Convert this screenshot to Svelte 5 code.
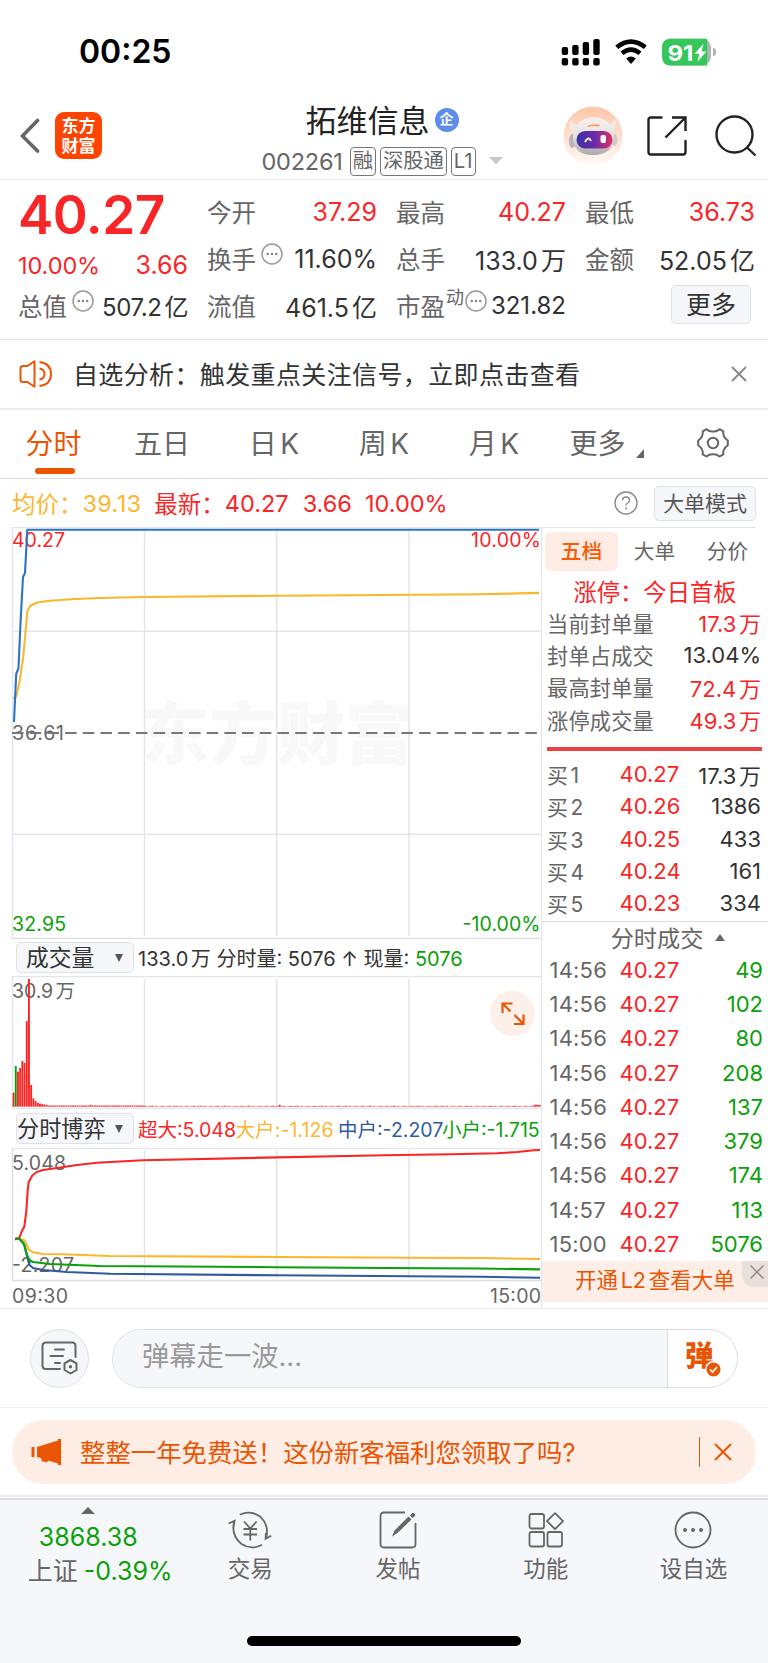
<script lang="ts">
	type Tone = 'up' | 'down' | 'ink';

	interface Row {
		label: string;
		value: string;
		tone: Tone;
	}

	const periods = ['分时', '五日', '日K', '周K', '月K'];

	const sealRows: Row[] = [
		{ label: '当前封单量', value: '17.3万', tone: 'up' },
		{ label: '封单占成交', value: '13.04%', tone: 'ink' },
		{ label: '最高封单量', value: '72.4万', tone: 'up' },
		{ label: '涨停成交量', value: '49.3万', tone: 'up' }
	];

	const bids = [
		{ label: '买1', price: '40.27', volume: '17.3万' },
		{ label: '买2', price: '40.26', volume: '1386' },
		{ label: '买3', price: '40.25', volume: '433' },
		{ label: '买4', price: '40.24', volume: '161' },
		{ label: '买5', price: '40.23', volume: '334' }
	];

	const trades = [
		{ time: '14:56', volume: 49 },
		{ time: '14:56', volume: 102 },
		{ time: '14:56', volume: 80 },
		{ time: '14:56', volume: 208 },
		{ time: '14:56', volume: 137 },
		{ time: '14:56', volume: 379 },
		{ time: '14:56', volume: 174 },
		{ time: '14:57', volume: 113 },
		{ time: '15:00', volume: 5076 }
	];

	const gridX = [144.5, 276.7, 409];

	// One bar per trading minute, the opening minutes carry nearly all volume
	const opening = [14, 40.7, 35, 38.7, 45.7, 43.7, 85.7, 127.7, 21.7, 8.3, 5.7, 3.9, 3.2, 2.6, 2.2, 1.8];
	const volumeBars = Array.from({ length: 241 }, (_, i) => {
		const quiet = i < 60 ? 1.2 : 0.3 + ((i * 37) % 11) / 14;
		const height = i === 35 || i === 121 || i >= 237 ? 1.9 : (opening[i] ?? quiet);
		return { x: 12.6 + i * 2.2, height, color: i === 1 ? '#0aa00a' : '#f92627' };
	});

	const flows = [
		{ color: '#2f5a9f', points: '16,1238.5 20,1239 24,1244 26,1252 28,1260 29.5,1265 33,1268 43,1270 67,1272 110,1273.8 277,1275.3 409,1276.3 480,1276.8 540,1277.7' },
		{ color: '#fbb72f', points: '16,1238.5 20,1239.2 24,1240 26,1243 28.7,1249.5 33,1252.3 43,1254 62,1254.2 110,1256 277,1257 409,1257.8 480,1258 540,1259' },
		{ color: '#f92627', points: '15,1239.5 19.3,1238 22,1230.7 24.3,1226.7 26.3,1211.7 27.7,1190 28.7,1182 32.3,1175.5 36.7,1172 43,1170 57,1168 77,1165 97,1162.7 143,1160.3 277,1157.4 384,1155.3 451,1154.3 497,1153.3 517,1152 534,1150.2 540,1150' },
		{ color: '#0aa00a', points: '15,1238.5 19,1238.8 22,1241.5 24.5,1245.5 26.5,1253 29,1260 33,1262 50,1264 100,1266 277,1267.2 384,1268 480,1268.5 540,1269.4' }
	];
</script>

{#snippet dots()}
	<svg class="dots" width="22" height="22" viewBox="0 0 22 22">
		<circle cx="11" cy="11" r="10" fill="none" stroke="#999" stroke-width="1.5" />
		<circle cx="6.8" cy="11" r="1.3" fill="#888" />
		<circle cx="11" cy="11" r="1.3" fill="#888" />
		<circle cx="15.2" cy="11" r="1.3" fill="#888" />
	</svg>
{/snippet}

<div class="screen">
	<div class="status">
		<span class="clock">00:25</span>
		<svg width="151" height="28" viewBox="561 37 151 28">
			<rect x="561.7" y="46" width="6.4" height="8" rx="2" />
			<rect x="572.2" y="44" width="6.4" height="10" rx="2" />
			<rect x="582.7" y="41" width="6.4" height="13" rx="2" />
			<rect x="593.3" y="38" width="6.4" height="16" rx="2" />
			<rect x="561.7" y="57" width="6.4" height="7.4" rx="2" />
			<rect x="572.2" y="57" width="6.4" height="7.4" rx="2" />
			<rect x="582.7" y="57" width="6.4" height="7.4" rx="2" />
			<rect x="593.3" y="57" width="6.4" height="7.4" rx="2" />
			<path d="M616.7 46.3Q631 34.8 645.3 46.3M622 52.3Q631 45 640 52.3" fill="none" stroke="#000" stroke-width="4.6" />
			<path d="M626.2 57.5Q631 53.7 635.8 57.5L631 63Z" />
			<path d="M670 37.7H702A9 9 0 0 1 711 46.7V55.5A9 9 0 0 1 702 64.5H670Z" fill="#b3b3b6" />
			<path d="M670 37.7H707.2V64.5H670A8 8 0 0 1 662 56.5V45.7A8 8 0 0 1 670 37.7Z" fill="#34c759" />
			<text x="667.5" y="59.5" class="battery" textLength="26" lengthAdjust="spacingAndGlyphs">91</text>
			<path d="M703.5 42.8L694.5 52.8H699.2L697.5 60.8L706.5 50.5H701.6Z" fill="#fff" />
		</svg>
		<i class="battery-tip"></i>
	</div>

	<header>
		<div class="head-left">
			<svg width="20" height="36" viewBox="0 0 20 36">
				<path d="M17.5 2.5L2.5 18L17.5 33" fill="none" stroke="#666" stroke-width="3.6" stroke-linecap="round" />
			</svg>
			<div class="logo"><span>东方</span><span>财富</span></div>
		</div>
		<div class="head-mid">
			<div class="name">拓维信息<span class="corp">企</span></div>
			<div class="code">
				<span class="digits">002261</span>
				<span class="tag">融</span>
				<span class="tag">深股通</span>
				<span class="tag">L1</span>
				<svg width="14" height="8" viewBox="0 0 14 8"><path d="M0 0H14L7 7.5Z" fill="#c8c8c8" /></svg>
			</div>
		</div>
		<div class="head-right">
			<svg width="60" height="60" viewBox="0 0 60 60">
				<defs>
					<linearGradient id="halo" x1="0" y1="0" x2="0" y2="1">
						<stop offset="0" stop-color="#ffc5a8" />
						<stop offset="1" stop-color="#fffaf7" />
					</linearGradient>
					<linearGradient id="visor" x1="0" y1="0" x2="1" y2="0">
						<stop offset="0" stop-color="#3a2fa3" />
						<stop offset=".5" stop-color="#6b2ca8" />
						<stop offset="1" stop-color="#e0325e" />
					</linearGradient>
					<linearGradient id="shell" x1="0" y1="0" x2="0" y2="1">
						<stop offset="0" stop-color="#f6f1f1" />
						<stop offset=".5" stop-color="#e6e1e3" />
						<stop offset="1" stop-color="#aca7ac" />
					</linearGradient>
				</defs>
				<circle cx="30" cy="30" r="29.5" fill="url(#halo)" />
				<path d="M10 26Q4 19 9 14Q10 20 17 19ZM50 26Q56 17 51 13Q50 19 43 18Z" fill="#f3e9e7" />
				<ellipse cx="9.5" cy="35" rx="3.5" ry="7" fill="#b9b3b8" />
				<ellipse cx="51.5" cy="34" rx="3" ry="6" fill="#cfc8cd" />
				<path d="M10 31C11 17 20 11.5 30 11.5C42 11.5 50 17 51 30C51 43 43 49 30 49C17 49 10 43 10 31Z" fill="url(#shell)" />
				<rect x="13.5" y="25" width="36" height="17.5" rx="8.7" fill="url(#visor)" />
				<path d="M24 20Q30 17 37 19L36 20.5Q30 19.5 25 21Z" fill="#ff9b50" />
				<path d="M22 36Q25.500 29.500 28 35" fill="none" stroke="#fff" stroke-width="1.8" />
				<rect x="37.5" y="29" width="5.5" height="8" rx="2" fill="#fff" />
			</svg>
			<svg width="40" height="40" viewBox="0 0 40 40" fill="none" stroke="#222" stroke-width="2.4" stroke-linecap="round" stroke-linejoin="round">
				<path d="M14.5 1.5H4Q1.5 1.5 1.5 4V36Q1.5 38.5 4 38.5H36Q38.5 38.5 38.5 36V25" />
				<path d="M25 1.5H38.5V15M38 2L18.5 21.5" stroke-linecap="butt" stroke-linejoin="miter" />
			</svg>
			<svg width="42" height="42" viewBox="0 0 42 42" fill="none" stroke="#222" stroke-width="2.4">
				<circle cx="19.5" cy="19.5" r="18" />
				<path d="M32 32.5L40.5 40.5" />
			</svg>
		</div>
	</header>

	<section class="quote">
		<div class="col">
			<div class="cell big">40.27</div>
			<div class="cell up low"><span class="pct">10.00%</span><span>3.66</span></div>
			<div class="cell"><span class="key">总值{@render dots()}</span><span class="tight">507.2亿</span></div>
		</div>
		<div class="col">
			<div class="cell"><span class="key">今开</span><span class="up">37.29</span></div>
			<div class="cell"><span class="key">换手{@render dots()}</span><span>11.60%</span></div>
			<div class="cell"><span class="key">流值</span><span>461.5亿</span></div>
		</div>
		<div class="col">
			<div class="cell"><span class="key">最高</span><span class="up">40.27</span></div>
			<div class="cell"><span class="key">总手</span><span>133.0万</span></div>
			<div class="cell"><span class="key pe">市盈<sup>动</sup>{@render dots()}</span><span class="tight">321.82</span></div>
		</div>
		<div class="col">
			<div class="cell"><span class="key">最低</span><span class="up">36.73</span></div>
			<div class="cell"><span class="key">金额</span><span>52.05亿</span></div>
			<div class="cell"><button class="more">更多</button></div>
		</div>
	</section>

	<div class="notice">
		<svg width="34" height="28" viewBox="0 0 34 28" fill="none" stroke="#ea5504" stroke-width="2" stroke-linejoin="round">
			<path d="M15.5 1.2V26.8L8.5 22H4Q1.5 22 1.5 19.5V8.5Q1.5 6 4 6H8.5Z" />
			<path d="M20.5 8.5Q25.5 9.5 25.5 14T20.5 19.5M20.5 2Q32 3.5 32 14T20.5 26" />
		</svg>
		<span>自选分析：触发重点关注信号，立即点击查看</span>
		<svg class="close" width="16" height="16" viewBox="0 0 16 16"><path d="M1 1L15 15M15 1L1 15" stroke="#888" stroke-width="1.9" /></svg>
	</div>

	<nav class="periods">
		{#each periods as period, i}
			<span class="period" class:active={i === 0}>{period}</span>
		{/each}
		<span class="period">更多<svg width="8" height="9" viewBox="0 0 8 9"><path d="M8 0V9H0Z" fill="#666" /></svg></span>
		<span class="period gear">
			<svg width="32" height="32" viewBox="0 0 32 32" fill="none" stroke="#666" stroke-width="2" stroke-linejoin="round">
				<path d="M9.5 2.2Q12.500 4.8 16 4.400Q19.500 4.800 22.500 2.200L26.300 4.400Q25.500 10 30.800 13.500V18.200Q25.500 22 26.300 27.300L22.500 29.500Q19.500 27 16 27.300Q12.500 27 9.500 29.500L5.700 27.300Q6.500 22 1.200 18.200V13.500Q6.500 10 5.700 4.400Z" />
				<circle cx="16" cy="16" r="5.2" />
			</svg>
		</span>
	</nav>

	<div class="summary">
		<span class="avg">均价：</span><span class="avg s1">39.13</span>
		<span class="up">最新：</span><span class="up s2">40.27</span><span class="up s3">3.66</span><span class="up s4">10.00%</span>
		<svg class="help" width="24" height="24" viewBox="0 0 24 24">
			<circle cx="12" cy="12" r="11" fill="none" stroke="#888" stroke-width="1.4" />
			<path d="M8.5 9.5Q8.5 6 12 6T15.5 9.3Q15.500 11 13.700 12T12 14.500" fill="none" stroke="#888" stroke-width="1.4" />
			<circle cx="12" cy="17.5" r="1" fill="#888" />
		</svg>
		<button>大单模式</button>
	</div>

	<div class="board">
		<div class="charts">
			<svg width="541" height="412" viewBox="0 527 541 412">
				<text class="mark" x="141" y="759" textLength="272">东方财富</text>
				<path d="M12.5 939V527.5H541M12 631.3H541M12 834.3H541" class="grid" />
				{#each gridX as x}
					<path d="M{x} 529V936" class="grid" />
				{/each}
				<path d="M12 938.5H541" stroke="#d9dde4" stroke-width="1.6" />
				<text x="12" y="547" textLength="53" fill="#f92627">40.27</text>
				<text x="541" y="547" textLength="70" text-anchor="end" fill="#f92627">10.00%</text>
				<text x="12" y="739.5" textLength="52" fill="#666">36.61</text>
				<text x="12" y="931" textLength="54" fill="#0aa00a">32.95</text>
				<text x="540.5" y="931" textLength="78" text-anchor="end" fill="#0aa00a">-10.00%</text>
				<path d="M12 733H539" stroke="#777" stroke-width="2" stroke-dasharray="11.500 6.200" />
				<polyline points="13,698 16,697 19.3,683 23.3,656.7 25.7,630 27.3,611.5 30,606 37,602.5 50,600.7 75,599 100,598 144.5,597 277,595.7 384,595 480,594.3 539,592.9" class="line" stroke="#fbb72f" />
				<polyline points="14,722 16.2,674 18.5,668 20.5,623 23,577 25,573 27.3,529.7 539,529.7" class="line" stroke="#2d74c4" />
			</svg>

			<div class="legend">
				<button class="pick">成交量<i class="down-tri"></i></button>
				<span class="vol">133.0万 分时量: 5076 ↑ 现量: <b>5076</b></span>
			</div>
			<div class="volume">
				<svg width="541" height="133" viewBox="0 976 541 133">
					<path d="M12.5 1109V976.5H541M12 1108.8H541" class="grid" />
					{#each gridX as x}
						<path d="M{x} 979V1107" class="grid" />
					{/each}
					<text x="12" y="998" textLength="63" fill="#666">30.9万</text>
					{#each volumeBars as bar}
						<rect x={bar.x} y={1106.7 - bar.height} width="1.9" height={bar.height} fill={bar.color} />
					{/each}
				</svg>
				<div class="expand">
					<svg width="24" height="24" viewBox="0 0 24 24" fill="none" stroke="#ea5504" stroke-width="2.2">
						<path d="M1.5 11V1.5H11.5M1.5 1.5L9.5 9.5M13 22H22.5V12.5M22.5 22L13.5 13" />
					</svg>
				</div>
			</div>

			<div class="legend game">
				<button class="pick">分时博弈<i class="down-tri"></i></button>
				<span class="l1">超大:5.048</span>
				<span class="l2">大户:-1.126</span>
				<span class="l3">中户:-2.207</span>
				<span class="l4">小户:-1.715</span>
			</div>
			<svg width="541" height="160" viewBox="0 1148 541 160">
				<path d="M12.5 1280V1148H541M12 1280.5H541" class="grid strong" />
				{#each gridX as x}
					<path d="M{x} 1150V1278" class="grid" />
				{/each}
				<text x="12" y="1169.5" textLength="54" fill="#666">5.048</text>
				<text x="12" y="1271.5" textLength="62" fill="#666">-2.207</text>
				{#each flows as flow}
					<polyline points={flow.points} class="line" stroke={flow.color} />
				{/each}
				<text x="12" y="1303" textLength="56" fill="#666">09:30</text>
				<text x="541" y="1303" textLength="51" text-anchor="end" fill="#666">15:00</text>
			</svg>
		</div>

		<aside>
			<div class="depth-tabs"><span class="on">五档</span><span>大单</span><span>分价</span></div>
			<div class="limit">涨停：今日首板</div>
			{#each sealRows as row}
				<div class="seal"><span class="key">{row.label}</span><span class={row.tone}>{row.value}</span></div>
			{/each}
			<div class="bar"></div>
			{#each bids as bid}
				<div class="bid"><span class="key">{bid.label}</span><span class="up">{bid.price}</span><span>{bid.volume}</span></div>
			{/each}
			<div class="ticks-title">分时成交<i></i></div>
			{#each trades as trade}
				<div class="tick"><span class="key">{trade.time}</span><span class="up">40.27</span><span class="down">{trade.volume}</span></div>
			{/each}
			<div class="unlock">
				开通L2查看大单
				<span class="unlock-close"><svg width="14" height="14" viewBox="0 0 14 14"><path d="M0.5 0.5L13.5 13.5M13.5 0.5L0.5 13.5" stroke="#888" stroke-width="1.4" /></svg></span>
			</div>
		</aside>
	</div>

	<div class="comment">
		<div class="round">
			<svg width="38" height="34" viewBox="0 0 38 34" fill="none" stroke="#666" stroke-width="2" stroke-linecap="round">
				<path d="M19 28H5Q1.5 28 1.5 24.5V5Q1.5 1.5 5 1.5H31Q34.5 1.5 34.5 5V16" />
				<path d="M14 8.5H23M9.5 15H22M14 22H19" />
				<path d="M29.5 19L35.5 22.3V29L29.5 32.5L23.5 29V22.3Z" stroke-linejoin="round" />
				<circle cx="29.5" cy="25.8" r="1.7" fill="#666" stroke="none" />
			</svg>
		</div>
		<div class="input">
			<span class="placeholder">弹幕走一波...</span>
			<span class="danmu">弹<svg width="17" height="17" viewBox="0 0 17 17"><circle cx="8.5" cy="8.5" r="7.7" fill="#ea5504" stroke="#fff" stroke-width="1.4" /><path d="M5 8.5L7.6 11L12 6" fill="none" stroke="#fff" stroke-width="1.7" /></svg></span>
		</div>
	</div>

	<div class="promo-wrap">
		<div class="promo">
			<svg width="31" height="28" viewBox="0 0 31 28" fill="#ea5504">
				<rect x="0.5" y="9" width="3" height="10" />
				<path d="M6 9L27 2.5V1H30V27H27V25.5L17 22.5Q16 25.5 14 23.8L11 23.5L10 20L6 19Z" />
			</svg>
			<span>整整一年免费送！这份新客福利您领取了吗?</span>
			<i></i>
			<svg width="18" height="18" viewBox="0 0 18 18"><path d="M1 1L17 17M17 1L1 17" stroke="#ea5504" stroke-width="2" /></svg>
		</div>
	</div>

	<footer>
		<div class="index">
			<i></i>
			<span class="down">3868.38</span>
			<span class="key">上证 <b>-0.39%</b></span>
		</div>
		<div class="tool">
			<svg width="44" height="38" viewBox="0 0 44 38" fill="none" stroke="#666" stroke-width="1.8">
				<path d="M11.8 3.800Q22.500 -1.300 32.500 5.800Q41.500 14.500 38 27.500M43.200 24.700L37.600 27.800L37.900 22M34 33.800Q23.500 39.500 13.500 33Q2.500 24 6.300 10M0.600 12.500L6.600 9.800L5.500 16" />
				<path d="M16 10.500L22.300 17.500L28.600 10.500M22.300 17.500V29.500M15.500 18H29M15.500 23.500H29" />
			</svg>
			<span>交易</span>
		</div>
		<div class="tool">
			<svg width="38" height="38" viewBox="0 0 38 38" fill="none" stroke="#666" stroke-width="1.800">
				<path d="M26 1.5H5Q1.5 1.5 1.5 5V33Q1.5 36.5 5 36.5H33Q36.5 36.5 36.5 33V12" />
				<path d="M13 25.500L15.500 19.500L29.500 5.500L32.500 8.500L18.500 22Z" fill="#666" stroke="none" />
				<path d="M31.5 4.5L34 2L36 4.2L33.5 6.7Z" fill="#666" stroke="#666" stroke-width="1" />
			</svg>
			<span>发帖</span>
		</div>
		<div class="tool">
			<svg width="36" height="36" viewBox="0 0 36 36" fill="none" stroke="#666" stroke-width="1.8">
				<rect x="1.5" y="2" width="14.5" height="14.5" rx="2" />
				<rect x="1.5" y="20" width="14.5" height="14.5" rx="2" />
				<rect x="19.5" y="20" width="14.5" height="14.5" rx="2" />
				<path d="M27 1.2L35 9.2L27 17.2L19 9.2Z" stroke-linejoin="round" />
			</svg>
			<span>功能</span>
		</div>
		<div class="tool">
			<svg width="38" height="38" viewBox="0 0 38 38">
				<circle cx="19" cy="19" r="17.5" fill="none" stroke="#666" stroke-width="1.8" />
				<circle cx="11" cy="19" r="2" fill="#666" />
				<circle cx="19" cy="19" r="2" fill="#666" />
				<circle cx="27" cy="19" r="2" fill="#666" />
			</svg>
			<span>设自选</span>
		</div>
		<div class="home"></div>
	</footer>
</div>

<style>
	:global(body) {
		margin: 0;
		background: #fff;
	}

	.screen {
		width: 768px;
		height: 1663px;
		display: flex;
		flex-direction: column;
		overflow: hidden;
		font-family: 'Inter', 'Noto Sans CJK SC', sans-serif;
		font-size: 25px;
		color: #333;
		white-space: nowrap;
		text-autospace: normal;
	}

	.screen * {
		box-sizing: border-box;
	}

	svg {
		display: block;
		flex: none;
	}

	button {
		font-family: inherit;
		padding: 0;
		color: #333;
		background: #f6f7fa;
		border: 1.5px solid #dfe1e6;
		border-radius: 5px;
	}

	.up {
		color: #f92627;
	}

	.down,
	b {
		color: #0aa00a;
		font-weight: 400;
	}

	.ink {
		color: #333;
	}

	.key {
		color: #666;
	}

	/* status bar */
	.status {
		height: 88px;
		display: flex;
		align-items: center;
		padding: 15px 55px 0 79px;
	}

	.clock {
		flex: 1;
		font-size: 32px;
		font-weight: 600;
		color: #000;
	}

	.battery {
		font-size: 22px;
		font-weight: 700;
		fill: #fff;
	}

	.battery-tip {
		width: 3px;
		height: 8px;
		margin-left: 1px;
		margin-right: -3px;
		background: #b3b3b6;
		border-radius: 0 4px 4px 0;
	}

	/* stock header */
	header {
		height: 92px;
		display: grid;
		grid-template-columns: 205px 354px 209px;
		border-bottom: 1.5px solid #ececec;
	}

	.head-left {
		display: flex;
		align-items: center;
		padding: 4px 0 0 20px;
		gap: 15px;
	}

	.logo {
		width: 47px;
		height: 47px;
		border-radius: 9px;
		background: #ff4400;
		color: #fff;
		font: 700 17px/20px 'Noto Sans CJK SC', sans-serif;
		display: flex;
		flex-direction: column;
		align-items: center;
		justify-content: center;
		padding-bottom: 1px;
	}

	.head-mid {
		display: flex;
		flex-direction: column;
		align-items: center;
	}

	.name {
		display: flex;
		align-items: center;
		height: 62px;
		padding-bottom: 1px;
		font-size: 31px;
		gap: 5px;
		color: #222;
	}

	.corp {
		width: 24px;
		height: 24px;
		margin-top: 2px;
		border-radius: 50%;
		background: #5d8cec;
		color: #fff;
		font-size: 14px;
		font-weight: 700;
		line-height: 22px;
		text-align: center;
	}

	.code {
		display: flex;
		align-items: center;
		height: 22px;
		gap: 4px;
		font-size: 23.5px;
		color: #666;
	}

	.digits {
		margin-right: 3px;
		letter-spacing: -0.2px;
	}

	.tag {
		height: 29px;
		padding: 0 2px;
		border: 1.3px solid #777;
		border-radius: 4px;
		font-size: 20.3px;
		line-height: 25px;
	}

	.code svg {
		margin-left: 9px;
	}

	.head-right {
		display: flex;
		align-items: center;
		padding: 4px 0 0 4px;
	}

	.head-right svg:nth-child(2) {
		margin: 0 28px 0 24px;
	}

	/* quote */
	.quote {
		height: 160px;
		display: grid;
		grid-template-columns: repeat(4, 170px);
		gap: 19px;
		padding: 8px 0 0 18px;
		border-bottom: 1.5px solid #e8e8ea;
	}

	.cell {
		height: 47px;
		display: flex;
		align-items: center;
		justify-content: space-between;
	}

	.cell .key {
		display: flex;
		align-items: center;
		font-size: 24.5px;
	}

	.big {
		font-size: 53px;
		font-weight: 600;
		color: #f92627;
		letter-spacing: -0.5px;
		padding-top: 7px;
	}

	.low {
		padding-top: 13px;
	}

	.pct {
		font-size: 23.5px;
		letter-spacing: -0.1px;
	}

	.dots {
		margin: -10px 0 0 5px;
	}

	.tight {
		font-size: 24px;
		letter-spacing: -0.4px;
	}

	.pe .dots {
		margin-left: 1px;
	}

	.pe + .tight {
		letter-spacing: 0;
	}

	sup {
		font-size: 18px;
		line-height: 20px;
		margin-top: -16px;
		margin-left: 1px;
	}

	.more {
		width: 80px;
		height: 39px;
		margin: -2px 4px 0 auto;
		font-size: 25px;
		line-height: 34px;
	}

	/* notice */
	.notice {
		height: 70px;
		display: flex;
		align-items: center;
		padding: 0 21px 0 19px;
		border-bottom: 2px solid #ededed;
		font-size: 25px;
		letter-spacing: 0.37px;
	}

	.notice span {
		margin: 0 0 3px 20px;
	}

	.close {
		margin-left: auto;
	}

	/* period tabs */
	.periods {
		height: 69px;
		display: grid;
		grid-template-columns: 107px 110px 114px 106px 114px 107px 110px;
		border-bottom: 1.5px solid #dcdde3;
		font-size: 28px;
		color: #666;
	}

	.period {
		display: flex;
		flex-direction: column;
		align-items: center;
		justify-content: center;
		position: relative;
		padding-bottom: 4px;
	}

	.gear {
		padding-bottom: 2px;
	}

	.active {
		color: #ea5504;
	}

	.active::after {
		content: '';
		position: absolute;
		left: 35px;
		bottom: 4px;
		width: 40px;
		height: 6px;
		border-radius: 3px;
		background: #ea5504;
	}

	.period:nth-child(6) {
		padding-right: 14px;
	}

	.period:nth-child(6) svg {
		position: absolute;
		left: 85px;
		top: 39px;
	}

	/* latest values */
	.summary {
		height: 48px;
		display: flex;
		align-items: center;
		padding: 0 12px;
		font-size: 23.5px;
	}

	.avg {
		color: #fbb72f;
	}

	.s1 {
		margin-right: 13px;
		letter-spacing: 0.3px;
	}

	.s2 {
		margin-right: 14px;
	}

	.s3 {
		margin-right: 13px;
	}

	.help {
		margin: 0 16px 0 auto;
	}

	.summary button {
		width: 102px;
		height: 35px;
		font-size: 21px;
		line-height: 31px;
		color: #555;
	}

	/* charts */
	.board {
		height: 782px;
		display: grid;
		grid-template-columns: 541px 227px;
		border-bottom: 1.5px solid #e8e9ec;
	}

	.charts {
		display: flex;
		flex-direction: column;
	}

	.charts text {
		font-size: 19.5px;
	}

	.charts .mark {
		font-size: 68px;
		font-weight: 900;
		fill: #f8f8f8;
	}

	.grid {
		fill: none;
		stroke: #e1e5ed;
		stroke-width: 1.5;
	}

	.strong {
		stroke: #d9dde4;
	}

	.line {
		fill: none;
		stroke-width: 2.1;
		stroke-linejoin: round;
	}

	.legend {
		height: 37px;
		display: flex;
		align-items: center;
		padding-left: 16px;
		font-size: 20px;
	}

	.pick {
		width: 118px;
		height: 31px;
		margin-right: 4px;
		padding: 0 10px 0 9px;
		font-size: 22.8px;
		line-height: 27px;
		display: flex;
		align-items: center;
		justify-content: space-between;
	}

	.down-tri {
		border: 4.5px solid transparent;
		border-top: 8px solid #555;
		border-bottom: 0;
	}

	.game {
		height: 39px;
		font-size: 19.5px;
	}

	.game .pick {
		padding-left: 0;
		font-size: 22.2px;
	}

	.l1 {
		color: #f92627;
		width: 97.5px;
	}

	.l2 {
		color: #fbb72f;
		width: 102.5px;
		letter-spacing: 0.1px;
	}

	.l3 {
		color: #2f5a9f;
		width: 104px;
	}

	.l4 {
		color: #0aa00a;
	}

	.volume {
		position: relative;
	}

	.expand {
		position: absolute;
		left: 490px;
		top: 15px;
		width: 45px;
		height: 45px;
		border-radius: 50%;
		background: #fdf0ea;
		display: flex;
		align-items: center;
		justify-content: center;
	}

	/* order book */
	aside {
		border-left: 1.5px solid #e1e5ed;
		display: flex;
		flex-direction: column;
		font-size: 22px;
	}

	.depth-tabs {
		height: 46px;
		margin-right: 12px;
		padding: 4px 0 0 3px;
		border-top: 1.3px solid #e1e5ed;
		display: grid;
		grid-template-columns: 73px 73px 73px;
		font-size: 20.7px;
		line-height: 39px;
		text-align: center;
		color: #666;
	}

	.on {
		background: #feece4;
		color: #fa5a05;
		border-radius: 6px;
		height: 39px;
		font-weight: 500;
	}

	.limit {
		height: 34px;
		line-height: 39px;
		font-size: 23.3px;
		text-align: center;
		color: #f92627;
	}

	.seal {
		height: 32.4px;
		display: flex;
		align-items: center;
		justify-content: space-between;
		padding: 0 7px 2px 5px;
	}

	.seal .key {
		font-size: 21.2px;
		letter-spacing: 0.2px;
	}

	.bar {
		height: 4px;
		margin: 10px 6px 7px 5px;
		background: #ee4145;
		flex: none;
	}

	.bid,
	.tick {
		height: 32.4px;
		display: grid;
		grid-template-columns: 72.5px 1fr 1fr;
		align-items: center;
		padding: 0 7px 0 5px;
	}

	.bid .key {
		font-size: 21px;
	}

	.bid :last-child,
	.tick :last-child {
		text-align: right;
	}

	.ticks-title {
		height: 32px;
		margin-top: 1px;
		border-top: 1.5px solid #dcdfe5;
		padding-left: 26px;
		font-size: 23.2px;
		color: #666;
		display: flex;
		align-items: center;
		justify-content: center;
		gap: 12px;
	}

	.ticks-title i {
		border: 5.5px solid transparent;
		border-bottom: 7px solid #666;
		border-top: 0;
	}

	.tick {
		height: 34.3px;
		padding: 0 5px 0 7.5px;
		grid-template-columns: 70px 1fr 1fr;
	}

	.tick .key {
		letter-spacing: 0.2px;
	}

	.unlock {
		height: 41px;
		position: relative;
		background: #fdefe8;
		color: #ea5504;
		padding-left: 33px;
		font-size: 21.5px;
		line-height: 38px;
	}

	.unlock-close {
		position: absolute;
		right: 0;
		top: 0;
		width: 26px;
		height: 26px;
		background: #e9e0dc;
		border-radius: 0 0 0 12px;
		padding: 4px 0 0 8px;
	}

	/* comment box */
	.comment {
		height: 99px;
		display: flex;
		align-items: center;
		padding: 0 30px;
		gap: 23px;
		border-bottom: 1.3px solid #f0f0f2;
	}

	.round {
		width: 59px;
		height: 59px;
		border: 1.3px solid #dfe0e6;
		border-radius: 50%;
		background: #f6f7fa;
		display: flex;
		align-items: center;
		justify-content: center;
	}

	.input {
		width: 626px;
		height: 59px;
		border: 1.3px solid #dcdde3;
		border-radius: 30px;
		display: flex;
		overflow: hidden;
	}

	.placeholder {
		flex: 1;
		background: #f6f7fa;
		padding-left: 29px;
		font-size: 27.3px;
		line-height: 53px;
		color: #999;
	}

	.danmu {
		width: 70px;
		border-left: 1.5px solid #dcdde3;
		padding-left: 17px;
		position: relative;
		font-size: 28.5px;
		font-weight: 900;
		line-height: 51px;
		color: #ea5504;
	}

	.danmu svg {
		position: absolute;
		left: 37px;
		top: 31px;
	}

	/* promo strip */
	.promo-wrap {
		height: 89px;
		padding: 12px 12px 0;
		border-bottom: 2px solid #ebebeb;
	}

	.promo {
		height: 64px;
		border-radius: 32px;
		background: #feede4;
		color: #ea5504;
		display: flex;
		align-items: center;
		padding: 0 24px 0 19px;
		font-size: 25.4px;
	}

	.promo span {
		margin: 0 0 3px 18px;
	}

	.promo i {
		width: 1.5px;
		height: 30px;
		margin: 0 14px 0 auto;
		background: #ea5504;
	}

	/* bottom bar */
	footer {
		flex: 1;
		margin-top: 1px;
		border-top: 2px solid #dcdee3;
		background: #f6f7fa;
		display: grid;
		grid-template-columns: 176.5px repeat(4, 147.7px);
		grid-template-rows: 90px 1fr;
	}

	.index {
		display: flex;
		flex-direction: column;
		align-items: center;
		padding-top: 7px;
		font-size: 25px;
	}

	.index i {
		border: 7px solid transparent;
		border-bottom: 7px solid #666;
		border-top: 0;
	}

	.index span {
		line-height: 34px;
	}

	.index .down {
		margin-top: 6px;
	}

	.index .key {
		width: 145px;
		margin-left: 24px;
	}

	.index .key b {
		margin-left: -1px;
	}

	.tool {
		display: flex;
		flex-direction: column;
		align-items: center;
		padding-top: 11px;
		font-size: 22.5px;
		color: #666;
	}

	.tool svg {
		height: 38px;
	}

	.tool span {
		line-height: 40px;
	}

	.home {
		grid-column: 1 / -1;
		width: 274px;
		height: 10px;
		margin: 46px auto 0;
		border-radius: 5px;
		background: #000;
	}
</style>
